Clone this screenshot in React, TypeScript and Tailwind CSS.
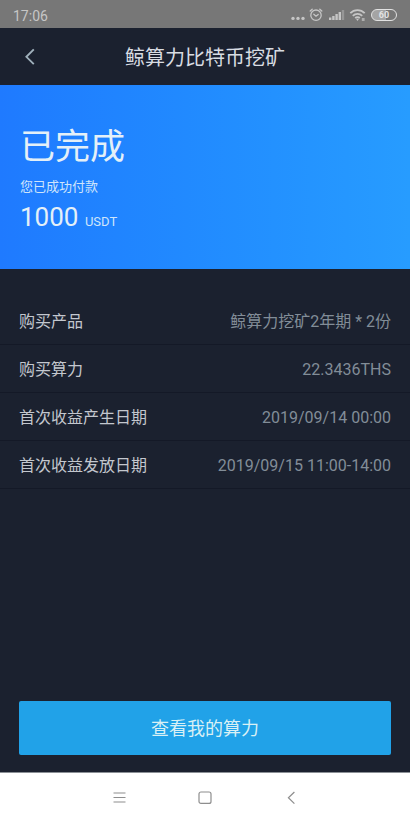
const rows = [
  { label: "购买产品", value: "鲸算力挖矿2年期 * 2份" },
  { label: "购买算力", value: "22.3436THS" },
  { label: "首次收益产生日期", value: "2019/09/14 00:00" },
  { label: "首次收益发放日期", value: "2019/09/15 11:00-14:00" },
];

function StatusBar() {
  return (
    <div className="flex h-7 items-center justify-between bg-[#777777] px-[13px] text-[#c6c6c6]">
      <span className="pt-1 text-[14px] leading-5">17:06</span>
      <div className="flex items-center pt-0.5">
        <svg width="14" height="14" viewBox="0 0 14 14" fill="currentColor">
          <circle cx="2" cy="10.4" r="1.7" />
          <circle cx="7" cy="10.4" r="1.7" />
          <circle cx="12" cy="10.4" r="1.7" />
        </svg>
        <svg className="ml-1" width="14" height="14" viewBox="0 0 14 14" fill="none" stroke="currentColor" strokeLinecap="round">
          <circle cx="7" cy="7.2" r="5.2" strokeWidth="1.3" />
          <path d="M1.2 3 3.2 1.2M12.8 3 10.8 1.2M4.8 6.2 7 8.2 9.2 6.4" strokeWidth="1.3" />
        </svg>
        <svg className="ml-1.5" width="16" height="14" viewBox="0 0 16 14" fill="currentColor">
          <path d="M0 9.5h2.4V12H0zM3.2 8h2.4v4H3.2zM6.4 6h2.4v6H6.4zM9.6 4H12v8H9.6z" />
          <path d="M12.8 2h2.4v10h-2.4z" opacity=".4" />
        </svg>
        <svg className="ml-1" width="18" height="14" viewBox="0 0 18 14" fill="none" stroke="currentColor">
          <path d="M1.3 5.2a10 10 0 0 1 14.4 0M3.8 7.8a6.6 6.6 0 0 1 9.4 0M6.2 10.2a3.2 3.2 0 0 1 4.6 0" strokeWidth="1.8" />
          <path d="M7 10.7 8.5 13l1.5-2.3z" fill="currentColor" stroke="none" />
          <path d="M12.8 10h2.8v3h-2.8z" fill="currentColor" stroke="none" opacity=".7" />
        </svg>
        <span className="ml-1 flex h-3 w-[26px] items-center justify-center rounded-full border border-current bg-linear-to-r from-[#a4a4a4] from-60% to-[#777777] to-60% text-[9px] leading-none font-bold text-[#e2e2e2]">
          60
        </span>
      </div>
    </div>
  );
}

function Header() {
  return (
    <header className="grid h-[57px] grid-cols-[60px_1fr_60px] items-center">
      <button type="button" aria-label="返回" className="flex h-full items-center pl-6">
        <svg width="12" height="18" viewBox="0 0 12 18" fill="none" stroke="#9fb0bb" strokeWidth="1.9">
          <path d="M9.8 1.4 2.4 8.8l7.4 7.4" />
        </svg>
      </button>
      <h1 className="pt-0.5 text-center text-[20px] leading-7 text-[#d8dce2]">鲸算力比特币挖矿</h1>
    </header>
  );
}

function NavBar() {
  return (
    <nav className="flex h-[50px] items-center justify-center gap-[70px] border-t border-[#8b9096] bg-white text-[#8e8e8e]">
      <button type="button" aria-label="菜单">
        <svg width="16" height="16" viewBox="0 0 16 16" fill="none" stroke="currentColor" strokeWidth="1.1">
          <path d="M2.5 3h12M2.5 7.5h12M2.5 12h12" />
        </svg>
      </button>
      <button type="button" aria-label="主页">
        <svg width="16" height="16" viewBox="0 0 16 16" fill="none" stroke="currentColor" strokeWidth="1.2">
          <rect x="2" y="2" width="12" height="11.4" rx="2" />
        </svg>
      </button>
      <button type="button" aria-label="后退">
        <svg width="16" height="16" viewBox="0 0 16 16" fill="none" stroke="currentColor" strokeWidth="1.2">
          <path d="M11.4 2 5.4 7.8l6 5.8" />
        </svg>
      </button>
    </nav>
  );
}

export default function App() {
  return (
    <div className="min-h-screen bg-white pr-0.5 font-[Roboto,'Noto_Sans_CJK_SC',sans-serif]">
      <div className="flex min-h-screen flex-col bg-[#1b212f]">
        <StatusBar />
        <Header />

        <section className="h-[184px] bg-linear-to-r from-[#1f7aff] to-[#279cff] px-5 pt-[38px] text-[#e4f0f8]">
          <h2 className="text-[35px] leading-[50px]">已完成</h2>
          <p className="mt-1 text-[13px] leading-5 text-[#cfe5fb]">您已成功付款</p>
          <p className="mt-0.5 text-[26px] leading-9">
            1000 <span className="text-[13px] text-[#cfe5fb]">USDT</span>
          </p>
        </section>

        <dl className="pt-7 text-[16px] leading-6">
          {rows.map((row) => (
            <div key={row.label} className="flex h-12 items-center justify-between border-b border-[#141927] px-[19px] pt-0.5">
              <dt className="text-[#c3c7ce]">{row.label}</dt>
              <dd className="text-[#828d98]">{row.value}</dd>
            </div>
          ))}
        </dl>

        <div className="mt-auto px-[19px] pb-[17px]">
          <button type="button" className="h-[54px] w-full rounded-xs bg-[#21a2e8] text-[18px] text-[#d9f0f5]">
            查看我的算力
          </button>
        </div>
        <NavBar />
      </div>
    </div>
  );
}
